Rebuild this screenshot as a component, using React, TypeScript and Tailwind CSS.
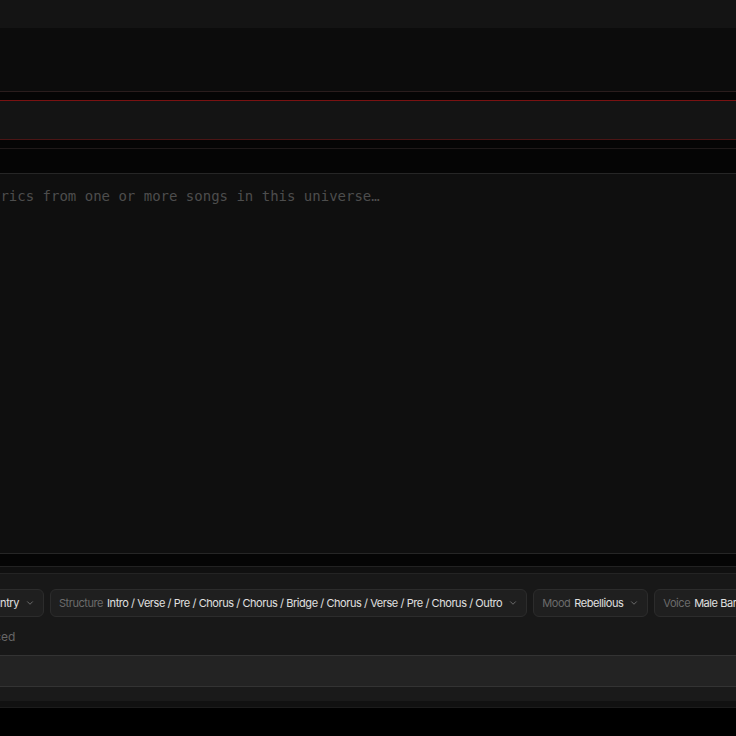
import { ChevronDown } from "lucide-react";

function Chip({ label, value }: { label: string; value: string }) {
  return (
    <div className="flex h-7 shrink-0 items-center gap-1 rounded-md border border-[#2c2c2c] bg-[#1f1f1f] pl-2 pr-2 text-[11px] tracking-[-0.04em]">
      <span className="text-[#6b6b6b]">{label}</span>
      <span className="text-[#e0e0e0]">{value}</span>
      <ChevronDown size={10} className="ml-0.5 text-[#7a7a7a]" />
    </div>
  );
}

export default function App() {
  return (
    <div className="h-[736px] w-[736px] overflow-hidden bg-black font-['Inter',sans-serif]">
      <div className="-ml-[80px] w-[940px]">
        <div className="h-[28px] bg-[#141414]" />
        <div className="h-[63px] bg-[#0c0c0c]" />
        <div className="border-t border-[#2a1d1d] bg-[#050505] pt-2">
          <div className="h-[40px] border-y border-t-[#7a1212] border-b-[#4b1515] bg-[#141414]" />
        </div>
        <div className="h-[8px] bg-[#050505]" />
        <div className="h-[25px] border-t border-[#1f1a1a] bg-[#050505]" />
        <div className="border-y border-[#262626] bg-[#0f0f0f]">
          <textarea
            className="block h-[379px] w-full resize-none bg-transparent p-3 pl-[13px] font-['DejaVu_Sans_Mono',monospace] text-[14px] leading-[21px] text-[#ddd] outline-none placeholder:text-[#4d4d4d]"
            placeholder="Paste lyrics from one or more songs in this universe…"
            readOnly
          />
        </div>
        <div className="h-[12px] bg-[#050505]" />
        <div className="h-[7px] border-t border-[#222] bg-[#101010]" />
        <div className="border-t border-[#242424] bg-[#181818] pt-[15px]">
          <div className="flex gap-1.5 pl-[18px]">
            <Chip label="Genre" value="Country" />
            <Chip label="Structure" value="Intro / Verse / Pre / Chorus / Chorus / Bridge / Chorus / Verse / Pre / Chorus / Outro" />
            <Chip label="Mood" value="Rebellious" />
            <Chip label="Voice" value="Male Baritone" />
          </div>
          <div className="mt-3 h-4 pl-[6px] text-[12px] leading-4 text-[#666]">Nothing synced</div>
          <div className="mt-[10px] h-[32px] border-y border-[#333] bg-[#232323]" />
          <div className="h-[14px] bg-[#1a1a1a]" />
        </div>
        <div className="h-[6px] bg-[#111]" />
        <div className="h-[29px] border-t border-[#1c1c1c] bg-black" />
      </div>
    </div>
  );
}
